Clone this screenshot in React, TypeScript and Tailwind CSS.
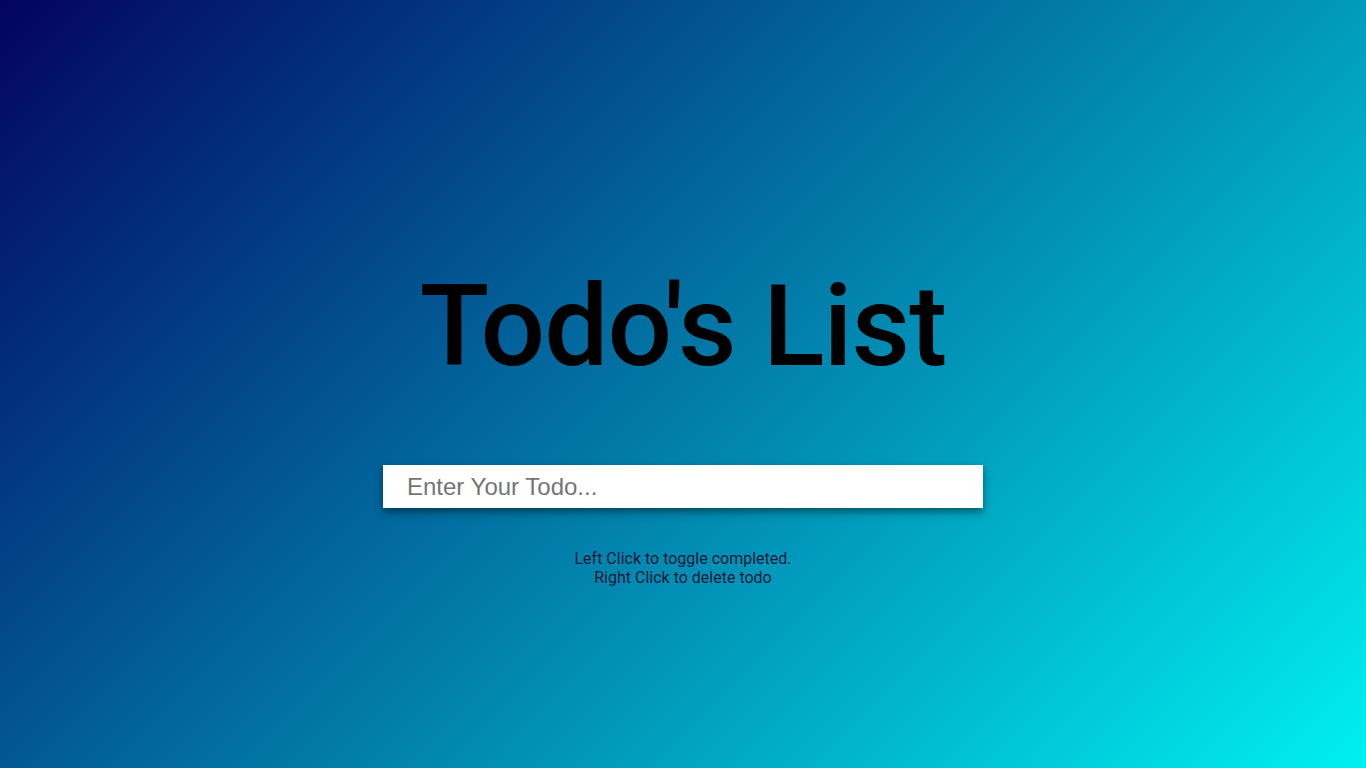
import React, { useState } from 'react';

const App = () => {
  const [todo, setTodo] = useState('');

  return (
    <div className="min-h-screen w-full bg-[linear-gradient(135deg,#03035f,#00f0f0)] font-['Roboto',sans-serif]">
      <div className="flex flex-col items-center pt-[259px]">
        <h1 className="text-[114px] leading-[134px] font-medium text-black tracking-[-1px]">Todo's List</h1>
        <input
          value={todo}
          onChange={(e) => setTodo(e.target.value)}
          placeholder="Enter Your Todo..."
          className="mt-[72px] w-[600px] h-[43px] bg-white px-6 text-[24px] text-[#333] placeholder:text-[#757575] font-['Liberation_Sans',Arial,sans-serif] outline-none shadow-[0_4px_8px_rgba(0,0,0,0.45)]"
        />
        <p className="mt-[41px] text-center text-[16px] leading-[19px] text-[#221a3a]">
          Left Click to toggle completed.
          <br />
          Right Click to delete todo
        </p>
      </div>
    </div>
  );
};

export default App;
